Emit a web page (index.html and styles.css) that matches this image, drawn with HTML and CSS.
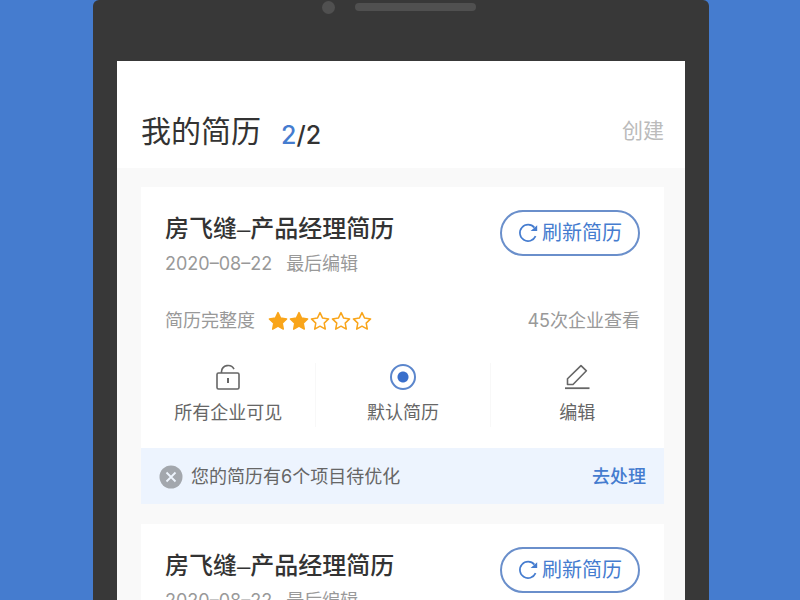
FILE: index.html
```html
<!DOCTYPE html>
<html lang="zh-CN">
<head>
    <meta charset="UTF-8">
    <meta name="viewport" content="width=device-width, initial-scale=1.0">
    <title>我的简历</title>
    <link rel="stylesheet" href="styles.css">
</head>
<body>
    <!-- shared icons -->
    <svg class="sprite" aria-hidden="true">
        <symbol id="refresh" viewBox="0 0 20 20">
            <path d="M17.6 13.2A8.2 8.2 0 1 1 16.4 4.6" fill="none" stroke="currentColor" stroke-width="1.7"/>
            <path d="M19.2 2.2V8H12.6Z" fill="currentColor"/>
        </symbol>
        <symbol id="star" viewBox="0 0 20 20">
            <path d="M10 1.6L12.6 7.1L18.6 7.9L14.2 12.1L15.3 18.1L10 15.2L4.7 18.1L5.8 12.1L1.4 7.9L7.4 7.1Z" stroke="#f9a51a" stroke-width="1.5" stroke-linejoin="round"/>
        </symbol>
        <symbol id="lock" viewBox="0 0 26 28">
            <rect x="2" y="10" width="22" height="16" rx="1.5" fill="none" stroke="currentColor" stroke-width="1.6"/>
            <path d="M6.5 10V8.5A6.6 6.6 0 0 1 19 6.2" fill="none" stroke="currentColor" stroke-width="1.6"/>
            <path d="M13 15V20" fill="none" stroke="currentColor" stroke-width="2"/>
        </symbol>
        <symbol id="pen" viewBox="0 0 26 28">
            <path d="M3.5 21.5V15.8L17 2.6L22.4 7.8L9 21.5Z" fill="none" stroke="currentColor" stroke-width="1.6" stroke-linejoin="round"/>
            <path d="M1 25.2H25.5" stroke="currentColor" stroke-width="1.8"/>
        </symbol>
        <symbol id="close" viewBox="0 0 24 24">
            <circle cx="12" cy="12" r="11.5" fill="#a3a7ad"/>
            <path d="M7.5 7.5L16.5 16.5M16.5 7.5L7.5 16.5" stroke="#eef5fe" stroke-width="1.8"/>
        </symbol>
    </svg>

    <div class="phone">
        <div class="phone-top">
            <span class="camera"></span>
            <span class="speaker"></span>
        </div>
        <main class="screen">
            <header class="header">
                <h1>我的简历</h1>
                <span class="count"><span class="current">2</span>/2</span>
                <a href="#" class="create">创建</a>
            </header>

            <div class="list">
                <article class="card">
                    <div class="card-body">
                        <div class="card-head">
                            <div>
                                <h2>房飞缝–产品经理简历</h2>
                                <p class="edited"><time datetime="2020-08-22">2020–08–22</time>最后编辑</p>
                            </div>
                            <button class="refresh"><svg><use href="#refresh"/></svg>刷新简历</button>
                        </div>
                        <div class="stats">
                            <span>简历完整度</span>
                            <span class="stars">
                                <svg class="on"><use href="#star"/></svg>
                                <svg class="on"><use href="#star"/></svg>
                                <svg><use href="#star"/></svg>
                                <svg><use href="#star"/></svg>
                                <svg><use href="#star"/></svg>
                            </span>
                            <span class="views">45次企业查看</span>
                        </div>
                    </div>
                    <div class="actions">
                        <button><svg><use href="#lock"/></svg>所有企业可见</button>
                        <label><input type="radio" name="default" checked>默认简历</label>
                        <button><svg><use href="#pen"/></svg>编辑</button>
                    </div>
                    <div class="notice">
                        <svg><use href="#close"/></svg>
                        <span>您的简历有6个项目待优化</span>
                        <a href="#">去处理</a>
                    </div>
                </article>

                <article class="card">
                    <div class="card-body">
                        <div class="card-head">
                            <div>
                                <h2>房飞缝–产品经理简历</h2>
                                <p class="edited"><time datetime="2020-08-22">2020–08–22</time>最后编辑</p>
                            </div>
                            <button class="refresh"><svg><use href="#refresh"/></svg>刷新简历</button>
                        </div>
                    </div>
                </article>
            </div>
        </main>
    </div>
</body>
</html>
```
FILE: styles.css
```css
* {
    box-sizing: border-box;
}
body {
    margin: 0;
    padding: 0 91px 0 93px;
    height: 100vh;
    overflow: hidden;
    background: #457ccf;
    font-family: Inter, "Noto Sans CJK SC", sans-serif;
    font-size: 18px;
    line-height: 28px;
    color: #666;
}
h1, h2, p {
    margin: 0;
}
a {
    text-decoration: none;
}
button {
    padding: 0;
    border: none;
    background: none;
    font: inherit;
    color: inherit;
    cursor: pointer;
}
.sprite {
    position: absolute;
    width: 0;
    height: 0;
}
.phone {
    min-height: 100vh;
    padding: 0 24px;
    background: #383838;
    border-radius: 6px 6px 0 0;
}
.phone-top {
    display: flex;
    justify-content: center;
    align-items: center;
    gap: 20px;
    height: 61px;
    padding: 0 4px 47px 0;
}
.camera {
    width: 13px;
    height: 13px;
    border-radius: 50%;
    background: #505050;
}
.speaker {
    width: 121px;
    height: 8px;
    border-radius: 4px;
    background: #505050;
}
.screen {
    background: #f9f9f9;
}
.header {
    display: flex;
    align-items: center;
    padding: 48px 21px 15px 24px;
    background: #fff;
}
h1 {
    font-size: 30px;
    line-height: 44px;
    font-weight: 400;
    color: #333;
}
.count {
    margin-left: 20px;
    padding-top: 8px;
    font-size: 25px;
    font-weight: 500;
    color: #333;
}
.current {
    color: #457ccf;
}
.create {
    margin-left: auto;
    font-size: 21px;
    color: #bbb;
}
.list {
    display: flex;
    flex-direction: column;
    gap: 20px;
    padding: 19px 21px 20px 24px;
}
.card {
    background: #fff;
}
.card-body {
    padding: 23px 24px 0;
}
.card-head {
    display: flex;
    justify-content: space-between;
    align-items: flex-start;
}
h2 {
    font-family: "Liberation Sans", "Noto Sans CJK SC", sans-serif;
    font-size: 24px;
    line-height: 38px;
    font-weight: 500;
    color: #333;
}
.edited {
    margin-top: 2px;
    color: #999;
}
time {
    margin-right: 14px;
}
.refresh {
    display: flex;
    justify-content: center;
    align-items: center;
    gap: 4px;
    width: 140px;
    height: 46px;
    border: 2px solid #6a8fcb;
    border-radius: 23px;
    font-size: 20px;
    color: #457ccf;
}
.refresh svg {
    width: 20px;
    height: 20px;
}
.stats {
    display: flex;
    align-items: center;
    margin-top: 29px;
    color: #999;
}
.stars {
    display: flex;
    gap: 1px;
    margin-left: 13px;
}
.stars svg {
    width: 20px;
    height: 20px;
    fill: none;
}
.stars .on {
    fill: #f9a51a;
}
.views {
    margin-left: auto;
}
.actions {
    display: grid;
    grid-template-columns: repeat(3, 1fr);
    padding: 28px 0 21px;
}
.actions button,
.actions label {
    display: flex;
    flex-direction: column;
    align-items: center;
    gap: 8px;
    cursor: pointer;
}
.actions > * + * {
    border-left: 1px solid #f8f8f8;
}
.actions svg {
    width: 26px;
    height: 28px;
}
.actions input {
    appearance: none;
    width: 26px;
    height: 26px;
    margin: 1px;
    border: 2px solid #5b86cc;
    border-radius: 50%;
    background: radial-gradient(circle, #3a6fcb 5px, #fff 6px);
}
.notice {
    display: flex;
    align-items: center;
    padding: 15px 18px 13px;
    background: #edf4fe;
}
.notice svg {
    width: 24px;
    height: 24px;
    margin-right: 8px;
}
.notice a {
    margin-left: auto;
    font-weight: 500;
    color: #457ccf;
}
```
